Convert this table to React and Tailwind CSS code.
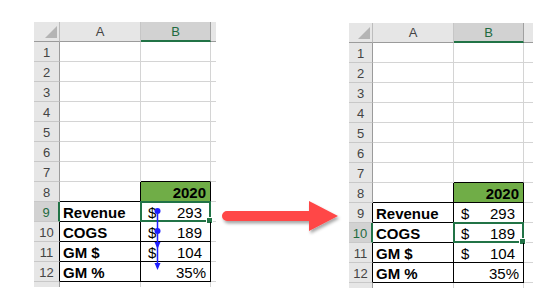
const ROWS = [
  null, null, null, null, null, null, null,
  { b: '2020' },
  { a: 'Revenue', cur: true, b: '293' },
  { a: 'COGS', cur: true, b: '189' },
  { a: 'GM $', cur: true, b: '104' },
  { a: 'GM %', b: '35%' },
];

function Corner() {
  return (
    <div className="relative bg-[#e6e6e6] border-r border-b border-r-[#bdbdbd] border-b-[#9b9b9b]">
      <svg className="absolute right-[2px] bottom-[3px]" width="12" height="12" viewBox="0 0 12 12">
        <polygon points="12,0 12,12 0,12" fill="#b4b4b4" />
      </svg>
    </div>
  );
}

function RowHeader({ n, selected }) {
  const inTable = n >= 9 && n <= 12;
  let cls = 'bg-[#e6e6e6] text-[#444] border-r border-r-[#9b9b9b]';
  if (selected) cls = 'bg-[#d2d2d2] text-[#1e6b40] border-r-2 border-r-[#217346]';
  else if (inTable) cls = 'bg-[#e6e6e6] text-[#444] border-r border-r-black';
  return (
    <div className={`flex items-center justify-center text-[13px] leading-[15px] pt-[2px] border-b border-b-[#c8c8c8] ${cls}`}>
      {n}
    </div>
  );
}

function CellA({ n, row }) {
  const black = n >= 8;
  return (
    <div
      className={`flex items-end border-r border-b leading-[17px] pl-[3px] text-[15px] font-bold text-black ${
        black ? 'border-r-black border-b-black' : 'border-r-[#d4d4d4] border-b-[#d4d4d4]'
      }`}
    >
      {row?.a}
    </div>
  );
}

function CellB({ n, row, selected }) {
  const right = n >= 8 ? 'border-r-black' : 'border-r-[#d4d4d4]';
  const bottom = n >= 7 ? 'border-b-black' : 'border-b-[#d4d4d4]';
  const fill = n === 8 ? 'bg-[#70ad47] font-bold pr-[4px]' : row?.cur ? 'pr-[8px]' : 'pr-[4px]';
  return (
    <div className={`relative flex items-end justify-between border-r border-b leading-[17px] text-[15px] text-black ${right} ${bottom} ${fill}`}>
      <span className="pl-[7px]">{row?.cur ? '$' : ''}</span>
      <span>{row?.b}</span>
      {selected && (
        <div className="absolute -top-px -left-px right-[-1px] bottom-[-1px] border-2 border-[#217346]">
          <div className="absolute -right-[4px] -bottom-[4px] w-[7px] h-[7px] bg-[#217346] border border-white" />
        </div>
      )}
    </div>
  );
}

function TraceArrows() {
  // precedents from B9 and B10 into B11, then B11 into B12
  return (
    <svg className="absolute left-0 top-0 pointer-events-none" width="182" height="266">
      <line x1="123.5" y1="189" x2="123.5" y2="243" stroke="#1f1fff" strokeWidth="1.5" />
      <circle cx="123.5" cy="189" r="3" fill="#1f1fff" />
      <circle cx="123.5" cy="209" r="3" fill="#1f1fff" />
      <polygon points="120.5,220 126.5,220 123.5,227" fill="#1f1fff" />
      <polygon points="120.5,241 126.5,241 123.5,248" fill="#1f1fff" />
    </svg>
  );
}

function Sheet({ cols, selRow, trace }) {
  return (
    <div className={`relative grid ${cols} grid-rows-[20px_repeat(12,20px)_5px]`}>
      <Corner />
      <div className="flex items-center justify-center bg-[#e6e6e6] text-[#444] text-[13px] pt-[1px] border-r border-b border-r-[#c6c6c6] border-b-[#9b9b9b]">
        A
      </div>
      <div className="flex items-center justify-center bg-[#d2d2d2] text-[#1e6b40] text-[13px] pt-[1px] border-r border-b-2 border-r-[#a0a0a0] border-b-[#217346]">
        B
      </div>
      <div className="bg-[#e6e6e6] border-b border-b-[#9b9b9b]" />

      {ROWS.map((row, i) => {
        const n = i + 1;
        return [
          <RowHeader key={`h${n}`} n={n} selected={n === selRow} />,
          <CellA key={`a${n}`} n={n} row={row} />,
          <CellB key={`b${n}`} n={n} row={row} selected={n === selRow} />,
          <div key={`x${n}`} className="border-b border-b-[#d4d4d4]" />,
        ];
      })}

      <div className="bg-[#e6e6e6] border-r border-r-[#9b9b9b]" />
      <div className="border-r border-r-[#d4d4d4]" />
      <div className="border-r border-r-[#d4d4d4]" />
      <div />

      {trace && <TraceArrows />}
    </div>
  );
}

function BigArrow() {
  return (
    <svg width="124" height="40" viewBox="0 0 124 40" className="ml-[4px] mt-[176px]">
      <defs>
        <filter id="arrowShadow" x="-10%" y="-30%" width="130%" height="180%">
          <feDropShadow dx="1.5" dy="2.5" stdDeviation="1.6" floodColor="#000" floodOpacity="0.35" />
        </filter>
      </defs>
      <g filter="url(#arrowShadow)">
        <path d="M7 13 H92 V23 H7 A5 5 0 0 1 7 13 Z" fill="#ff4646" />
        <polygon points="89,3 118,18 89,33" fill="#ff4646" />
      </g>
    </svg>
  );
}

export default function App() {
  return (
    <div className="flex w-[554px] h-[306px] bg-white pl-[34px] pt-[22px] font-['Liberation_Sans',Arial,sans-serif] overflow-hidden">
      <Sheet cols="grid-cols-[26px_81px_70px_5px]" selRow={9} trace />
      <div className="w-[133px] shrink-0">
        <BigArrow />
      </div>
      <div className="mt-px">
        <Sheet cols="grid-cols-[24px_81px_70px_9px]" selRow={10} />
      </div>
    </div>
  );
}
